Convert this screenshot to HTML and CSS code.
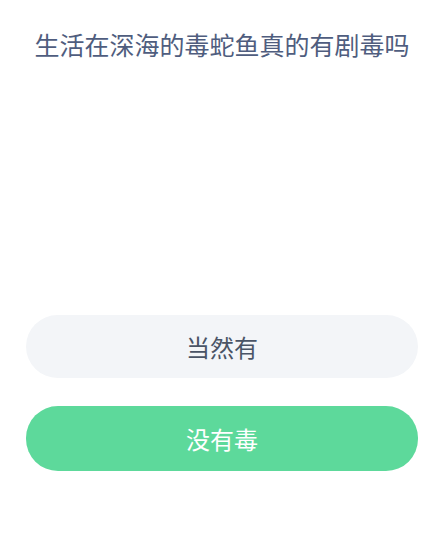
FILE: index.html
```html
<!DOCTYPE html>
<html lang="zh-CN">
<head>
    <meta charset="UTF-8">
    <meta name="viewport" content="width=device-width, initial-scale=1.0">
    <title>问答</title>
    <link rel="stylesheet" href="styles.css">
</head>
<body>
    <div class="quiz">
        <h1 class="question">生活在深海的毒蛇鱼真的有剧毒吗</h1>

        <div class="options">
            <button class="option">当然有</button>
            <button class="option option-answer">没有毒</button>
        </div>
    </div>
</body>
</html>
```

FILE: styles.css
```css
body {
    margin: 0;
    background-color: #ffffff;
    font-family: "Noto Sans CJK SC", "Noto Sans", sans-serif;
}
.quiz {
    padding: 28px 28px 0 26px;
    display: flex;
    flex-direction: column;
}
.question {
    margin: 0;
    font-size: 25px;
    font-weight: 400;
    line-height: 32px;
    text-align: center;
    color: #4f5d7e;
}
.options {
    margin-top: 255px;
    display: flex;
    flex-direction: column;
    gap: 28px;
}
.option {
    height: 63px;
    border: none;
    border-radius: 32px;
    background-color: #f3f5f8;
    color: #4a5466;
    font-family: inherit;
    font-size: 24px;
    cursor: pointer;
}
.option-answer {
    height: 65px;
    background-color: #5dd99b;
    color: #ffffff;
}
```
